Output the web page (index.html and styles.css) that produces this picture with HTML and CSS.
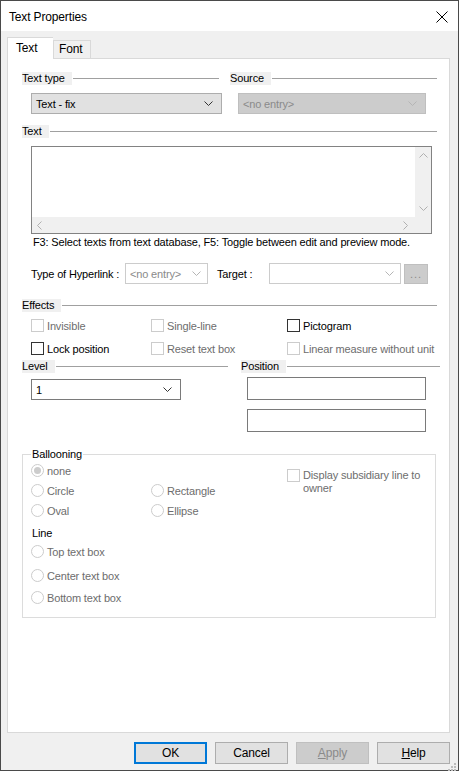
FILE: index.html
```html
<!DOCTYPE html>
<html lang="en">
<head>
  <meta charset="UTF-8">
  <title>Text Properties</title>
  <link rel="stylesheet" href="styles.css">
</head>
<body>
<div class="window">

  <!-- title bar -->
  <div class="titlebar">
    <span class="title">Text Properties</span>
    <svg class="close" width="12" height="12" viewBox="0 0 12 12"><path d="M0.5 0.5L11.5 11.5M11.5 0.5L0.5 11.5" stroke="#000" fill="none"/></svg>
  </div>

  <div class="client">
    <div class="tabs">
      <div class="tab active">Text</div>
      <div class="tab">Font</div>
    </div>

    <div class="panel">
      <!-- text type / source -->
      <div class="row heads1">
        <div class="sechead col-type"><span>Text type</span><i></i></div>
        <div class="sechead col-src"><span>Source</span><i></i></div>
      </div>
      <div class="row combos1">
        <div class="combo combo-btn w-type"><span>Text - fix</span><svg width="9" height="5" viewBox="0 0 9 5"><path d="M0.5 0.5L4.5 4.5L8.5 0.5" stroke="#333" fill="none"/></svg></div>
        <div class="combo combo-off w-src"><span>&lt;no entry&gt;</span><svg width="9" height="5" viewBox="0 0 9 5"><path d="M0.5 0.5L4.5 4.5L8.5 0.5" stroke="#b5b5b5" fill="none"/></svg></div>
      </div>

      <!-- text -->
      <div class="row head-text">
        <div class="sechead full"><span>Text</span><i></i></div>
      </div>
      <div class="textbox">
        <div class="tb-main">
          <div class="tb-edit"></div>
          <div class="vscroll">
            <svg width="9" height="5" viewBox="0 0 9 5"><path d="M0.5 4.5L4.5 0.5L8.5 4.5" stroke="#b0b0b0" fill="none"/></svg>
            <svg width="9" height="5" viewBox="0 0 9 5"><path d="M0.5 0.5L4.5 4.5L8.5 0.5" stroke="#b0b0b0" fill="none"/></svg>
          </div>
        </div>
        <div class="hscroll">
          <svg width="5" height="9" viewBox="0 0 5 9"><path d="M4.5 0.5L0.5 4.5L4.5 8.5" stroke="#b0b0b0" fill="none"/></svg>
          <svg width="5" height="9" viewBox="0 0 5 9"><path d="M0.5 0.5L4.5 4.5L0.5 8.5" stroke="#b0b0b0" fill="none"/></svg>
        </div>
      </div>
      <div class="help">F3: Select texts from text database, F5: Toggle between edit and preview mode.</div>

      <!-- hyperlink -->
      <div class="row hyper">
        <span class="lbl lbl-type">Type of Hyperlink :</span>
        <div class="combo combo-dis w-hyp"><span>&lt;no entry&gt;</span><svg width="9" height="5" viewBox="0 0 9 5"><path d="M0.5 0.5L4.5 4.5L8.5 0.5" stroke="#b5b5b5" fill="none"/></svg></div>
        <span class="lbl lbl-target">Target :</span>
        <div class="combo combo-dis w-target"><span></span><svg width="9" height="5" viewBox="0 0 9 5"><path d="M0.5 0.5L4.5 4.5L8.5 0.5" stroke="#b5b5b5" fill="none"/></svg></div>
        <div class="dots">...</div>
      </div>

      <!-- effects -->
      <div class="row head-eff">
        <div class="sechead full"><span>Effects</span><i></i></div>
      </div>
      <div class="checks">
        <label class="chk off"><b></b>Invisible</label>
        <label class="chk off"><b></b>Single-line</label>
        <label class="chk"><b></b>Pictogram</label>
        <label class="chk"><b></b>Lock position</label>
        <label class="chk off"><b></b>Reset text box</label>
        <label class="chk off"><b></b>Linear measure without unit</label>
      </div>

      <!-- level / position -->
      <div class="row head-lvl">
        <div class="sechead col-lvl"><span>Level</span><i></i></div>
        <div class="sechead col-pos"><span>Position</span><i></i></div>
      </div>
      <div class="row lvlpos">
        <div class="combo combo-white w-lvl"><span>1</span><svg width="9" height="5" viewBox="0 0 9 5"><path d="M0.5 0.5L4.5 4.5L8.5 0.5" stroke="#333" fill="none"/></svg></div>
        <div class="pos">
          <div class="edit"></div>
          <div class="edit"></div>
        </div>
      </div>

      <!-- ballooning -->
      <fieldset class="balloon">
        <legend>Ballooning</legend>
        <div class="bl-cols">
          <div class="bl-left">
            <div class="rrow r1"><label class="rad checked"><b></b>none</label></div>
            <div class="rrow r2"><label class="rad"><b></b>Circle</label><label class="rad"><b></b>Rectangle</label></div>
            <div class="rrow r3"><label class="rad"><b></b>Oval</label><label class="rad"><b></b>Ellipse</label></div>
            <div class="line-lbl">Line</div>
            <div class="rrow r4"><label class="rad"><b></b>Top text box</label></div>
            <div class="rrow r5"><label class="rad"><b></b>Center text box</label></div>
            <div class="rrow r6"><label class="rad"><b></b>Bottom text box</label></div>
          </div>
          <label class="chk off wrap"><b></b><span>Display subsidiary line to owner</span></label>
        </div>
      </fieldset>
    </div>

    <!-- dialog buttons -->
    <div class="buttons">
      <div class="btn default">OK</div>
      <div class="btn">Cancel</div>
      <div class="btn disabled"><u>A</u>pply</div>
      <div class="btn"><u>H</u>elp</div>
      <svg class="grip" width="8" height="8" viewBox="0 0 8 8">
        <rect x="6" y="0" width="2" height="2" fill="#bcbcbc"/>
        <rect x="3" y="3" width="2" height="2" fill="#bcbcbc"/>
        <rect x="6" y="3" width="2" height="2" fill="#bcbcbc"/>
        <rect x="0" y="6" width="2" height="2" fill="#bcbcbc"/>
        <rect x="3" y="6" width="2" height="2" fill="#bcbcbc"/>
        <rect x="6" y="6" width="2" height="2" fill="#bcbcbc"/>
      </svg>
    </div>
  </div>
</div>
</body>
</html>
```

FILE: styles.css
```css
* {
  box-sizing: border-box;
}
body {
  margin: 0;
  font-family: 'Liberation Sans', Arial, sans-serif;
  font-size: 11px;
  letter-spacing: -0.15px;
  color: #000;
  background: #fff;
}
.window {
  width: 459px;
  height: 771px;
  border: 1px solid #4a4a4a;
  display: flex;
  flex-direction: column;
  background: #f0f0f0;
}
.titlebar {
  height: 30px;
  background: #fff;
  display: flex;
  align-items: center;
  justify-content: space-between;
  padding: 0 10px 0 8px;
  flex-shrink: 0;
}
.title {
  font-size: 12px;
  margin-top: 1px;
}
.close {
  margin-top: 1px;
}
.client {
  flex: 1;
  padding: 6px 8px 0 6px;
  display: flex;
  flex-direction: column;
}

/* tabs */
.tabs {
  display: flex;
  align-items: flex-end;
  height: 21px;
  position: relative;
  z-index: 1;
}
.tab {
  height: 18px;
  padding: 0 0 0 5px;
  width: 38px;
  border: 1px solid #d9d9d9;
  border-bottom: none;
  background: #f0f0f0;
  line-height: 17px;
  font-size: 12px;
}
.tab.active {
  height: 22px;
  width: 46px;
  padding-left: 8px;
  line-height: 20px;
  background: #fff;
  margin-bottom: -1px;
  border-right: none;
}
.panel {
  height: 675px;
  background: #fff;
  border: 1px solid #d9d9d9;
  padding: 0 12px 0 14px;
}

/* rows */
.row {
  display: flex;
  align-items: center;
}
.sechead {
  display: flex;
  align-items: center;
  height: 13px;
}
.sechead span {
  background: #f0f0f0;
  padding-right: 7px;
  line-height: 13px;
  white-space: nowrap;
}
.sechead i {
  flex: 1;
  height: 1px;
  background: #a0a0a0;
  margin-left: 1px;
}
.heads1 {
  margin-top: 13px;
}
.col-type {
  width: 197px;
}
.col-src {
  flex: 1;
  margin-left: 11px;
}
.full {
  flex: 1;
}

/* combos */
.combo {
  height: 21px;
  display: flex;
  align-items: center;
  justify-content: space-between;
  padding: 0 8px 0 4px;
  border: 1px solid #adadad;
}
.combo span {
  white-space: nowrap;
}
.combo-btn {
  background: #e1e1e1;
}
.combo-off {
  background: #cccccc;
  border-color: #bfbfbf;
  color: #8a8a8a;
}
.combo-dis {
  background: #fff;
  border-color: #cccccc;
  color: #8a8a8a;
}
.combo-white {
  background: #fff;
  border-color: #7a7a7a;
}
.combos1 {
  margin-top: 8px;
}
.w-type {
  width: 191px;
  margin-left: 9px;
}
.w-src {
  width: 188px;
  margin-left: 16px;
}

/* text box */
.head-text {
  margin-top: 11px;
}
.textbox {
  margin: 8px 0 0 9px;
  width: 401px;
  height: 88px;
  border: 1px solid #828282;
  display: flex;
  flex-direction: column;
}
.tb-main {
  flex: 1;
  display: flex;
}
.tb-edit {
  flex: 1;
}
.vscroll {
  width: 16px;
  background: #f0f0f0;
  display: flex;
  flex-direction: column;
  justify-content: space-between;
  align-items: center;
  padding: 6px 0;
}
.hscroll {
  height: 16px;
  background: #f0f0f0;
  display: flex;
  align-items: center;
  padding-left: 5px;
}
.hscroll svg:nth-child(2) {
  margin-left: auto;
  margin-right: 23px;
}
.help {
  margin: 1px 0 0 11px;
  line-height: 15px;
  white-space: nowrap;
}

/* hyperlink */
.hyper {
  margin-top: 13px;
  height: 21px;
}
.lbl {
  white-space: nowrap;
}
.lbl-type {
  margin-left: 9px;
  width: 94px;
}
.w-hyp {
  width: 83px;
  padding-right: 6px;
}
.lbl-target {
  margin-left: 9px;
  width: 52px;
}
.w-target {
  width: 132px;
  padding-right: 6px;
}
.dots {
  margin-left: 3px;
  width: 24px;
  height: 20px;
  background: #cccccc;
  border: 1px solid #bfbfbf;
  color: #8a8a8a;
  text-align: center;
  line-height: 18px;
  letter-spacing: 1px;
}

/* effects */
.head-eff {
  margin-top: 15px;
}
.checks {
  margin: 6px 0 0 9px;
  display: grid;
  grid-template-columns: 120px 136px 1fr;
  grid-template-rows: 15px 15px;
  row-gap: 8px;
}
.chk, .rad {
  display: flex;
  align-items: center;
  white-space: nowrap;
  height: 15px;
}
.chk b {
  width: 13px;
  height: 13px;
  border: 1px solid #333;
  background: #fff;
  margin-right: 3px;
  flex-shrink: 0;
}
.chk.off {
  color: #6d6d6d;
}
.chk.off b {
  border-color: #cccccc;
}

/* level / position */
.head-lvl {
  margin-top: 4px;
}
.col-lvl {
  width: 206px;
}
.col-pos {
  flex: 1;
  margin-left: 13px;
  margin-right: -3px;
}
.lvlpos {
  margin-top: 4px;
  align-items: flex-start;
}
.w-lvl {
  margin: 2px 0 0 9px;
  width: 150px;
}
.pos {
  margin-left: 66px;
  display: flex;
  flex-direction: column;
  gap: 9px;
}
.edit {
  width: 179px;
  height: 23px;
  border: 1px solid #7a7a7a;
  background: #fff;
}

/* ballooning */
.balloon {
  margin: 15px 0 0;
  width: 414px;
  height: 171px;
  border: 1px solid #dcdcdc;
  padding: 0 0 0 8px;
}
.balloon legend {
  padding: 0 1px;
  line-height: 14px;
}
.bl-cols {
  display: flex;
}
.bl-left {
  width: 256px;
}
.rrow {
  display: flex;
}
.rrow .rad:first-child {
  width: 120px;
}
.r1 {
  margin-top: 2px;
}
.r2 {
  margin-top: 5px;
}
.r3 {
  margin-top: 5px;
}
.r4 {
  margin-top: 3px;
}
.r5 {
  margin-top: 9px;
}
.r6 {
  margin-top: 7px;
}
.rad {
  color: #6d6d6d;
}
.rad b {
  width: 13px;
  height: 13px;
  border: 1px solid #cccccc;
  border-radius: 50%;
  margin-right: 3px;
  background: #fff;
  position: relative;
  flex-shrink: 0;
}
.rad.checked b::after {
  content: '';
  position: absolute;
  left: 2px;
  top: 2px;
  width: 7px;
  height: 7px;
  border-radius: 50%;
  background: #cccccc;
}
.line-lbl {
  margin: 8px 0 0 1px;
  line-height: 15px;
}
.chk.wrap {
  align-items: flex-start;
  white-space: normal;
  height: auto;
  width: 140px;
  margin-top: 8px;
  line-height: 13px;
}

/* buttons */
.buttons {
  display: flex;
  justify-content: flex-end;
  gap: 8px;
  margin-top: 9px;
  position: relative;
  font-size: 12px;
}
.btn {
  width: 73px;
  height: 22px;
  background: #e1e1e1;
  border: 1px solid #adadad;
  text-align: center;
  line-height: 20px;
}
.btn.default {
  border: 2px solid #0078d7;
  line-height: 18px;
}
.btn.disabled {
  background: #cccccc;
  border-color: #bfbfbf;
  color: #8a8a8a;
}
.grip {
  position: absolute;
  right: -6px;
  top: 21px;
}
```
